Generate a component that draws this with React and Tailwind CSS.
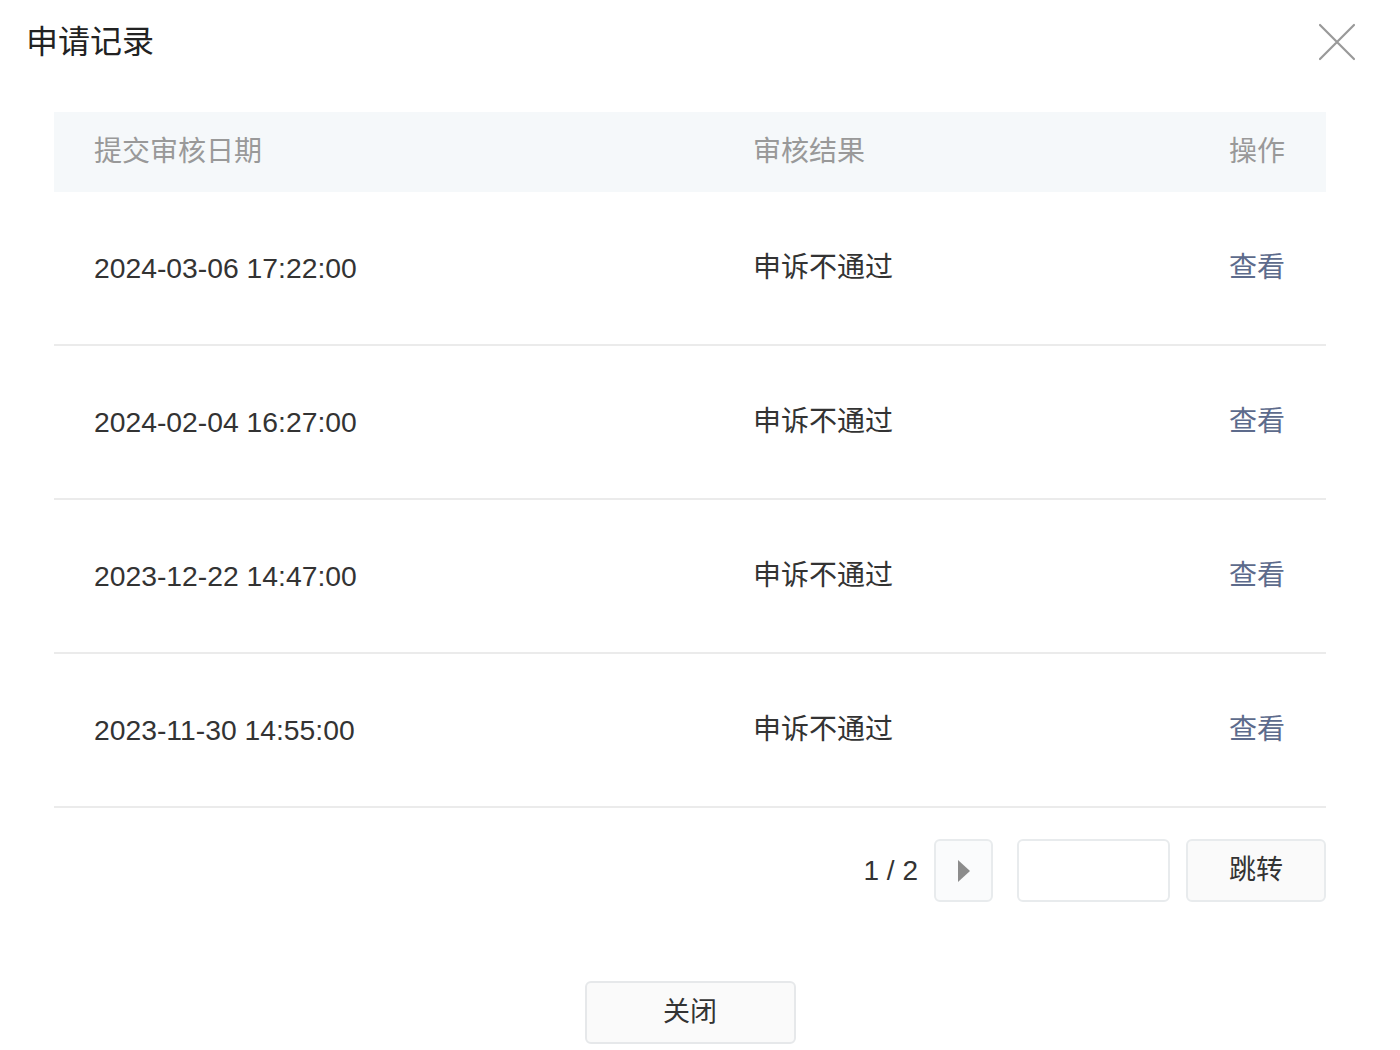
import React from 'react';

const rows = [
    { date: '2024-03-06 17:22:00', result: '申诉不通过' },
    { date: '2024-02-04 16:27:00', result: '申诉不通过' },
    { date: '2023-12-22 14:47:00', result: '申诉不通过' },
    { date: '2023-11-30 14:55:00', result: '申诉不通过' },
];

const App = () => {
    return (
        <div className="w-[1400px] h-[1050px] bg-white text-[#333] font-['Liberation_Sans','Noto_Sans_CJK_SC',sans-serif] relative">
            {/* Header */}
            <div className="flex items-center justify-between h-[84px] pl-[26px] pr-[44px]">
                <h1 className="text-[32px] leading-none text-[#222]">申请记录</h1>
                <button className="w-[38px] h-[38px] text-[#999]">
                    <svg viewBox="0 0 38 38" className="w-[38px] h-[38px]" fill="none" stroke="currentColor" strokeWidth="2.2" strokeLinecap="round">
                        <path d="M2 2L36 36M36 2L2 36" />
                    </svg>
                </button>
            </div>

            {/* Table */}
            <div className="ml-[54px] w-[1272px] mt-[28px]">
                <div className="grid grid-cols-[699px_1fr_auto] items-center h-[80px] bg-[#f5f8fa] text-[28px] text-[#999]">
                    <div className="pl-[40px]">提交审核日期</div>
                    <div>审核结果</div>
                    <div className="pr-[41px] text-right">操作</div>
                </div>
                {rows.map((r, i) => (
                    <div key={i} className="grid grid-cols-[699px_1fr_auto] items-center h-[154px] border-b-2 border-[#ebebeb] text-[28px]">
                        <div className="pl-[40px] text-[28.3px] text-[#333]">{r.date}</div>
                        <div className="text-[#333]">{r.result}</div>
                        <div className="pr-[41px] text-right text-[#5d6b8c] cursor-pointer">查看</div>
                    </div>
                ))}

                {/* Pagination */}
                <div className="flex items-center justify-end mt-[31px] h-[63px]">
                    <span className="text-[28px] text-[#333] mr-[16px]">1 / 2</span>
                    <button className="w-[59px] h-[63px] rounded-[6px] border-2 border-[#e8ebed] bg-[#fafbfc] flex items-center justify-center">
                        <svg viewBox="0 0 12 22" className="w-[12px] h-[22px]" fill="#8c8c8c">
                            <path d="M0 0L12 11L0 22Z" />
                        </svg>
                    </button>
                    <input className="ml-[24px] w-[153px] h-[63px] rounded-[6px] border-2 border-[#e8ebed] bg-white outline-none px-3 text-[26px]" />
                    <button className="ml-[16px] w-[140px] h-[63px] rounded-[6px] border-2 border-[#e8ebed] bg-[#fafafa] text-[27px] text-[#333]">跳转</button>
                </div>
            </div>

            {/* Footer */}
            <div className="flex justify-center mt-[79px] pr-[20px]">
                <button className="w-[211px] h-[63px] rounded-[6px] border-2 border-[#e6e8ea] bg-[#fafafa] text-[27px] text-[#333]">关闭</button>
            </div>
        </div>
    );
};

export default App;
